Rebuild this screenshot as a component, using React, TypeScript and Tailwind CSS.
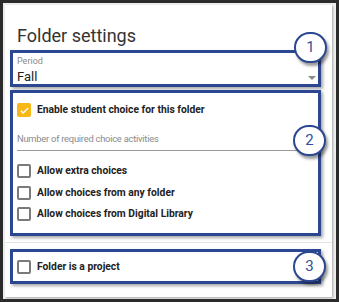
const choiceOptions = [
  'Allow extra choices',
  'Allow choices from any folder',
  'Allow choices from Digital Library',
]

function Checkbox({ checked = false }: { checked?: boolean }) {
  if (checked) {
    return (
      <span className="flex h-[14px] w-[14px] shrink-0 items-center justify-center rounded-[2px] bg-[#f6b717]">
        <svg width="11" height="11" viewBox="0 0 24 24" fill="none" stroke="white" strokeWidth="3">
          <path d="M4 12.5l5 5L20 6.5" />
        </svg>
      </span>
    )
  }
  return <span className="h-[14px] w-[14px] shrink-0 rounded-[2px] border-2 border-[#7a7a7a] bg-white" />
}

function Callout({ n, className }: { n: number; className: string }) {
  return (
    <div
      className={`absolute flex h-[31px] w-[33px] items-center justify-center rounded-full border-[2.5px] border-[#2c4791] bg-white text-[15px] text-[#2f4f9a] shadow-[2px_3px_3px_rgba(0,0,0,0.4)] ${className}`}
    >
      {n}
    </div>
  )
}

const box = 'box-border border-[3px] border-[#2c4791] shadow-[2px_2px_3px_rgba(0,0,0,0.35)]'

export default function App() {
  return (
    <div className="h-[302px] w-[339px] bg-[#2b2b2b] p-[3px] font-['Roboto',sans-serif]">
      <div className="h-full bg-[#eeeeee] pb-[2px] pl-[2px] pr-[4px] pt-[2px]">
        <div className="relative flex h-full flex-col bg-white pl-[5px] pr-[11px] pt-[19px] shadow-[1px_1px_2px_rgba(0,0,0,0.3)]">
          <h1 className="pl-[7px] text-[18px] leading-[24px] text-[#333333]">Folder settings</h1>

          {/* Period select */}
          <div className={`${box} mt-[2px] h-[37px] pl-[4px] pr-[2px] pt-[3px]`}>
            <p className="text-[9px] leading-[11px] text-[#8a8a8a]">Period</p>
            <div className="mt-[2px] flex items-center justify-between">
              <span className="text-[13px] leading-[16px] text-[#222222]">Fall</span>
              <span className="mt-[1px] h-0 w-0 border-x-[4px] border-t-[4px] border-x-transparent border-t-[#8a8a8a]" />
            </div>
          </div>

          {/* Student choice */}
          <div className={`${box} mt-[3px] h-[146px] pl-[4px] pr-[4px] pt-[10px]`}>
            <label className="flex items-center gap-[6px] leading-[14px]">
              <Checkbox checked />
              <span className="text-[10.3px] font-bold text-[#222222]">Enable student choice for this folder</span>
            </label>
            <div className="mt-[10px] h-[24px] border-b border-[#9a9a9a] text-[9.4px] leading-[23px] tracking-[-0.25px] text-[#8a8a8a]">
              Number of required choice activities
            </div>
            <div className="mt-[13px] flex flex-col gap-[7.5px]">
              {choiceOptions.map(label => (
                <label key={label} className="flex items-center gap-[6px] leading-[14px]">
                  <Checkbox />
                  <span className="text-[10.3px] font-bold text-[#222222]">{label}</span>
                </label>
              ))}
            </div>
          </div>

          <div className="-mr-[11px] -ml-[5px] mt-[6px] border-t border-[#e4e4e4]" />

          {/* Project */}
          <div className={`${box} mt-[6px] flex h-[35px] items-center gap-[6px] pl-[4px] leading-[14px]`}>
            <Checkbox />
            <span className="text-[10.3px] font-bold text-[#222222]">Folder is a project</span>
          </div>

          <Callout n={1} className="left-[289px] top-[27px]" />
          <Callout n={2} className="left-[288px] top-[120px]" />
          <Callout n={3} className="left-[288px] top-[246px]" />
        </div>
      </div>
    </div>
  )
}
